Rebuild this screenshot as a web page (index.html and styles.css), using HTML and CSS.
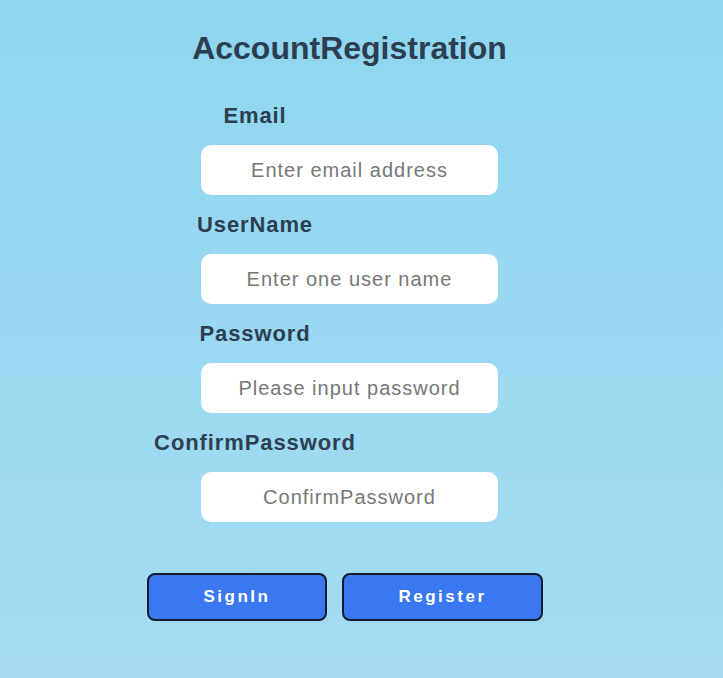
FILE: index.html
```html
<!DOCTYPE html>
<html lang="en">
<head>
<meta charset="utf-8">
<title>AccountRegistration</title>
<link rel="stylesheet" href="styles.css">
</head>
<body>
<div class="page">
  <h1 class="title">AccountRegistration</h1>
  <form class="form">
    <div class="field">
      <label class="label" for="email">Email</label>
      <input class="input" id="email" type="text" placeholder="Enter email address">
    </div>
    <div class="field">
      <label class="label" for="user">UserName</label>
      <input class="input" id="user" type="text" placeholder="Enter one user name">
    </div>
    <div class="field">
      <label class="label" for="pwd">Password</label>
      <input class="input" id="pwd" type="password" placeholder="Please input password">
    </div>
    <div class="field">
      <label class="label" for="cpwd">ConfirmPassword</label>
      <input class="input" id="cpwd" type="password" placeholder="ConfirmPassword">
    </div>
    <div class="actions">
      <button type="button" class="btn btn-signin">SignIn</button>
      <button type="button" class="btn btn-register">Register</button>
    </div>
  </form>
</div>
</body>
</html>
```
FILE: styles.css
```css
html, body {
  margin: 0;
  padding: 0;
  height: 100%;
}
body {
  font-family: "Liberation Sans", Arial, sans-serif;
  background: linear-gradient(180deg, #8ed6ef 0%, #a5dcf3 100%);
  color: #2c3e50;
}
.page {
  width: 699px;
  padding-top: 28px;
}
.title {
  margin: 0;
  font-size: 32px;
  line-height: 40px;
  font-weight: 700;
  text-align: center;
}
.form {
  margin-top: 36px;
  display: flex;
  flex-direction: column;
}
.field {
  display: flex;
  flex-direction: column;
  margin-bottom: 18px;
}
.label {
  width: 210px;
  margin-left: 150px;
  text-align: center;
  font-size: 22px;
  line-height: 24px;
  font-weight: 700;
  letter-spacing: 0.9px;
  margin-bottom: 17px;
}
.input {
  box-sizing: border-box;
  width: 297px;
  height: 50px;
  margin-left: 201px;
  border: none;
  border-radius: 10px;
  background: #ffffff;
  font-family: "Liberation Sans", Arial, sans-serif;
  font-size: 20px;
  letter-spacing: 1px;
  text-align: center;
  color: #333;
  outline: none;
  padding: 0 10px;
}
.input::placeholder {
  color: #777777;
}
.actions {
  display: flex;
  gap: 15px;
  margin-top: 33px;
  padding-left: 147px;
}
.btn {
  box-sizing: border-box;
  height: 48px;
  border: 2px solid #121a2c;
  border-radius: 8px;
  background: #3a78f1;
  color: #ffffff;
  font-family: "Liberation Sans", Arial, sans-serif;
  font-size: 17px;
  font-weight: 700;
  letter-spacing: 2.5px;
  padding: 0;
}
.btn-signin { width: 180px; }
.btn-register { width: 201px; }
```
